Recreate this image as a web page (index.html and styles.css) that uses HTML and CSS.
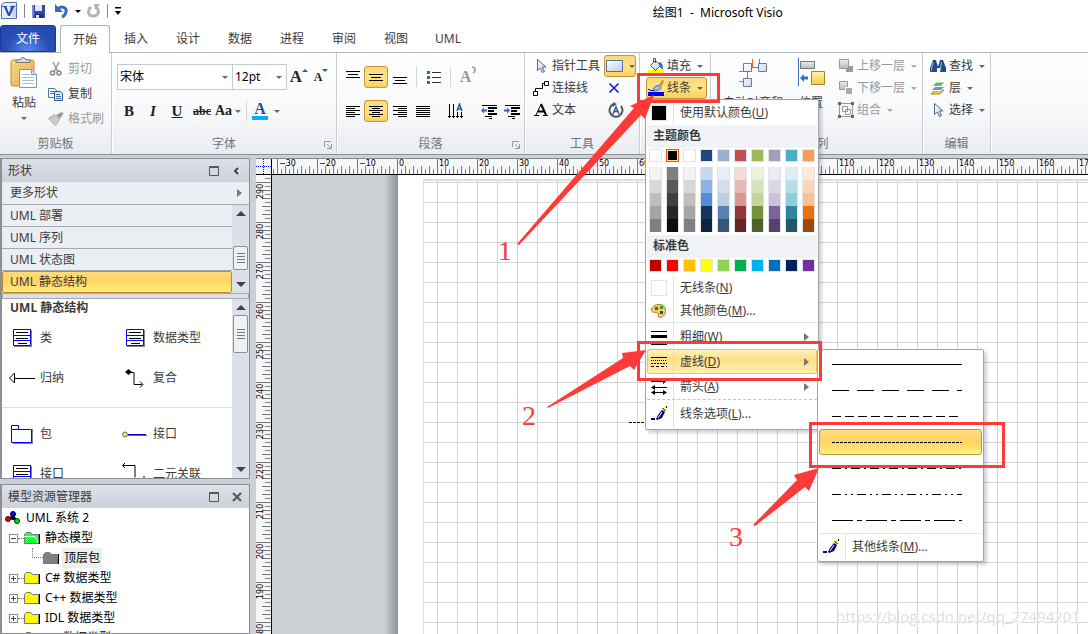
FILE: index.html
```html
<!DOCTYPE html>
<html lang="zh-CN">
<head>
<meta charset="utf-8">
<title>绘图1 - Microsoft Visio</title>
<link rel="stylesheet" href="styles.css">
</head>
<body>
<svg class="defs" aria-hidden="true">
  <defs>
    <linearGradient id="g-face" x1="0" y1="0" x2="1" y2="1"><stop offset="0" stop-color="#fff"/><stop offset="1" stop-color="#bccde2"/></linearGradient>
    <linearGradient id="g-gold" x1="0" y1="0" x2="0" y2="1"><stop offset="0" stop-color="#fff3b0"/><stop offset="1" stop-color="#f6c944"/></linearGradient>
    <linearGradient id="g-grey" x1="0" y1="0" x2="0" y2="1"><stop offset="0" stop-color="#eee"/><stop offset="1" stop-color="#b9b9b9"/></linearGradient>
    <linearGradient id="g-clip" x1="0" y1="0" x2="1" y2="1"><stop offset="0" stop-color="#f9d987"/><stop offset="1" stop-color="#e3a94a"/></linearGradient>
    <pattern id="p-yellow" width="2" height="2" patternUnits="userSpaceOnUse"><path fill="#ff0" d="M0 0h2v2H0z"/><path fill="#e4dfa0" d="M0 0h1v1H0zM1 1h1v1H1z"/></pattern>
    <pattern id="p-green" width="2" height="2" patternUnits="userSpaceOnUse"><path fill="#0f2" d="M0 0h2v2H0z"/><path fill="#7fe08a" d="M0 0h1v1H0zM1 1h1v1H1z"/></pattern>
    <symbol id="i-pointer" viewBox="0 0 16 16"><path fill="url(#g-face)" stroke="#55678a" d="M4.500 1.500v11l3-2.500 2 4.500 2-1-2-4.500h3.500z"/></symbol>
    <symbol id="i-pen" viewBox="0 0 16 16"><path fill="#ff0" d="M13 1h2v3l-2 2-2-2z"/><path stroke="#000" d="M11.500 2l3 3M15.500 0v2"/><path fill="#00007f" d="M11 4l3 2-3 6-5 2-1-1 2-4z"/><path stroke="#fff" d="M11 6L7 12"/><path fill="#00007f" d="M0 12h4v2H0z"/></symbol>
    <symbol id="i-class" viewBox="0 0 20 20"><path fill="#888" d="M2 18h17V2h1v17H2z"/><path fill="#fff" stroke="#00f" d="M1.500 1.500h17v16h-17zM1.500 7.500h17M1.500 12.500h17"/><path stroke="#000" d="M4 4.500h12M4 10.500h12M6 15.500h9"/></symbol>
    <symbol id="i-folder" viewBox="0 0 16 14"><path fill="#000" d="M2 13h14V3h-1v9H2z"/><path stroke="#777" d="M.5 12.500V3.500l2-2h4l2 2h6v9z"/></symbol>
    <symbol id="i-launch" viewBox="0 0 8 8"><path fill="none" stroke="#999" d="M.5 6V.5H7M3 3l4 4M7.500 3v4.500H3"/></symbol>
  </defs>
</svg>

<div class="app">
  <header class="titlebar">
    <div class="quick">
      <svg width="18" height="20" viewBox="0 0 18 20"><path fill="#e8effb" stroke="#4f6fb5" d="M1.500 3.500l3-2h12v16h-15z"/><path fill="#c5d4ef" d="M12 4h4v12h-4z"/><path fill="#2b4fa3" d="M2 5h5v1H6.500l2.500 6 2-6H10V5h5v1h-1l-4 9H8L4 6H2z"/></svg>
      <span class="vline"></span>
      <button class="qbtn" aria-label="保存"><svg width="15" height="15" viewBox="0 0 15 15"><path fill="#3c46a8" d="M1 1h13v13H2l-1-1z"/><path fill="#dfe8fa" d="M4 1h7v6H4z"/><path fill="#222a70" d="M4 10h8v4H4z"/><path fill="#ddd" d="M5 11h3v3H5z"/><path fill="#7886dc" d="M1 1h2v12H1z"/></svg></button>
      <button class="qbtn undo" aria-label="撤消"><svg width="14" height="14" viewBox="0 0 14 14"><path fill="none" stroke="#3568c2" stroke-width="3" d="M3 5c4-4 9-1 8 3-.5 3-2 4-4 5"/><path fill="#3568c2" d="M0 0v8h8z"/></svg></button>
      <i class="caret dark"></i>
      <button class="qbtn" aria-label="重复"><svg width="14" height="14" viewBox="0 0 14 14"><path fill="none" stroke="#b5b5b5" stroke-width="3" d="M4 3c-4 3-3 9 2 9 6 0 7-6 3-9"/><path fill="#b5b5b5" d="M7 0h6L8 6z"/></svg></button>
      <span class="vline"></span>
      <svg width="8" height="8" viewBox="0 0 8 8"><path d="M1 0h6v1.500H1zM1 4h6L4 8z"/></svg>
    </div>
    <h1 class="title">绘图1&nbsp; -&nbsp; Microsoft Visio</h1>
  </header>

  <nav class="tabs">
    <button class="file-tab">文件</button>
    <button class="tab active">开始</button>
    <button class="tab">插入</button>
    <button class="tab">设计</button>
    <button class="tab">数据</button>
    <button class="tab">进程</button>
    <button class="tab">审阅</button>
    <button class="tab">视图</button>
    <button class="tab">UML</button>
  </nav>

  <div class="ribbon">
    <section class="group g-clip">
      <div class="group-body">
        <button class="big">
          <svg width="28" height="32" viewBox="0 0 28 32"><rect x="1" y="3" width="23" height="26" rx="2" fill="url(#g-clip)" stroke="#c48b2e"/><path fill="#ddd" stroke="#777" d="M6 5.500h14V3h-4c0-3-6-3-6 0H6z"/><path fill="#fff" stroke="#7a94bd" d="M9.500 12.500h12l5 5v13h-17z"/><path fill="#cfdcf0" stroke="#7a94bd" d="M21.500 12.500v5h5"/><path stroke="#a9bcd8" d="M12 17.500h8M12 20.500h12M12 23.500h12M12 26.500h12"/></svg>
          <span>粘贴</span><i class="caret"></i>
        </button>
        <div class="rows rows-clip">
          <button class="cmd off"><svg width="16" height="16" viewBox="0 0 16 16"><path fill="none" stroke="#999" stroke-width="1.500" d="M5 1l5 10M11 1L6 11"/><circle cx="4.500" cy="12" r="2" fill="none" stroke="#888" stroke-width="1.500"/><circle cx="11" cy="12" r="2" fill="none" stroke="#888" stroke-width="1.500"/></svg>剪切</button>
          <button class="cmd"><svg width="16" height="16" viewBox="0 0 16 16"><path fill="#fff" stroke="#4a74b4" d="M.5 2.500h6l2 2v7h-8z"/><path fill="#d8e6f8" stroke="#2c5596" d="M6.500 5.500h6l2 2v7h-8z"/><path stroke="#4a74b4" d="M2 5.500h4M2 7.500h4M8 8.500h4M8 10.500h5M8 12.500h5"/></svg>复制</button>
          <button class="cmd off"><svg width="16" height="16" viewBox="0 0 16 16"><path fill="#ccc" stroke="#aaa" d="M.5 7.500l6-4 5 5-4 6z"/><path fill="#999" d="M8 4l2-1 4-2 1.500 1.500L13 6l-1 2z"/></svg>格式刷</button>
        </div>
      </div>
      <h2 class="group-name">剪贴板</h2>
    </section>

    <section class="group g-font">
      <div class="group-body col">
        <div class="strip">
          <span class="combo combo-name"><select aria-label="字体"><option>宋体</option></select><i class="caret"></i></span>
          <span class="combo combo-size"><select aria-label="字号"><option>12pt</option></select><i class="caret"></i></span>
          <button class="glyph grow" aria-label="增大字体">A<i class="up"></i></button>
          <button class="glyph shrink" aria-label="减小字体">A<i class="down"></i></button>
        </div>
        <div class="strip">
          <button class="glyph"><b>B</b></button>
          <button class="glyph"><em>I</em></button>
          <button class="glyph"><u>U</u></button>
          <button class="glyph small"><s>abc</s></button>
          <button class="glyph wide">Aa<i class="caret"></i></button>
          <span class="vsep"></span>
          <button class="glyph font-color">A</button><i class="caret"></i>
        </div>
      </div>
      <h2 class="group-name">字体</h2>
      <svg class="launch"><use href="#i-launch"/></svg>
    </section>

    <section class="group g-para">
      <div class="group-body col">
        <div class="strip">
          <button class="ib" aria-label="顶端对齐"><svg width="16" height="16"><path stroke="#000" d="M1 2.500h14M3 5.500h10M1 8.500h14"/></svg></button>
          <button class="ib on" aria-label="中部对齐"><svg width="16" height="16"><path stroke="#000" d="M1 5.500h14M3 8.500h10M1 11.500h14"/></svg></button>
          <button class="ib" aria-label="底端对齐"><svg width="16" height="16"><path stroke="#000" d="M1 8.500h14M3 11.500h10M1 14.500h14"/></svg></button>
          <span class="vsep"></span>
          <button class="ib" aria-label="项目符号"><svg width="16" height="16"><path stroke="#333" d="M6 3.500h9M6 8.500h9M6 13.500h9"/><path stroke="#3d5f9e" stroke-width="3" d="M1 3.500h3M1 8.500h3M1 13.500h3"/></svg></button>
          <span class="vsep"></span>
          <button class="glyph dim" aria-label="旋转文本">A<svg width="5" height="9"><path fill="none" stroke="#999" stroke-width="1.500" d="M1 1c4 0 4 4 1 6"/></svg></button>
        </div>
        <div class="strip">
          <button class="ib" aria-label="左对齐"><svg width="16" height="16"><path stroke="#000" d="M1 3.500h14M1 5.500h9M1 7.500h14M1 9.500h9M1 11.500h14M1 13.500h9"/></svg></button>
          <button class="ib on" aria-label="居中"><svg width="16" height="16"><path stroke="#000" d="M1 3.500h14M4 5.500h8M1 7.500h14M4 9.500h8M1 11.500h14M4 13.500h8"/></svg></button>
          <button class="ib" aria-label="右对齐"><svg width="16" height="16"><path stroke="#000" d="M1 3.500h14M6 5.500h9M1 7.500h14M6 9.500h9M1 11.500h14M6 13.500h9"/></svg></button>
          <button class="ib" aria-label="两端对齐"><svg width="16" height="16"><path stroke="#000" d="M1 3.500h14M1 5.500h14M1 7.500h14M1 9.500h14M1 11.500h14M1 13.500h14"/></svg></button>
          <span class="vsep"></span>
          <button class="ib" aria-label="文字方向"><svg width="16" height="16"><path stroke="#000" d="M1.500 1v14M5.500 1v14M9.500 9v6M13.500 9v6M0 13.500h3M4 13.500h3M8 13.500h3M12 13.500h3"/><path fill="none" stroke="#31569c" stroke-width="1.500" d="M9 8l2.500-7L14 8M10 6h4"/></svg></button>
          <span class="vsep"></span>
          <button class="ib" aria-label="减少缩进"><svg width="16" height="16"><path stroke="#000" d="M1 2.500h15M11 15.500h-3"/><path stroke="#000" stroke-width="2" d="M7 5h9M7 8h6M7 11h9"/><path stroke="#000" d="M4 13.500h7"/><path fill="#3567b8" d="M0 7.500l3-3v2h3v2H3v2z"/></svg></button>
          <button class="ib" aria-label="增加缩进"><svg width="16" height="16"><path stroke="#000" d="M1 2.500h15M11 15.500h-3"/><path stroke="#000" stroke-width="2" d="M7 5h9M7 8h6M7 11h9"/><path stroke="#000" d="M4 13.500h7"/><path fill="#3567b8" d="M6 7.500l-3-3v2H0v2h3v2z"/></svg></button>
        </div>
      </div>
      <h2 class="group-name">段落</h2>
      <svg class="launch"><use href="#i-launch"/></svg>
    </section>

    <section class="group g-tools">
      <div class="group-body">
        <div class="rows">
          <button class="cmd"><svg width="16" height="16"><use href="#i-pointer"/></svg>指针工具</button>
          <button class="cmd"><svg width="16" height="16" viewBox="0 0 16 16"><path fill="none" stroke="#000" d="M2.500 11V8.500h7v-5h2"/><path fill="#fff" stroke="#000" d="M.5 11.500h4v4h-4zM11.500 1.500h4v4h-4z"/></svg>连接线</button>
          <button class="cmd"><svg width="16" height="16" viewBox="0 0 16 16"><path fill="none" stroke="#000" stroke-width="2" d="M8 2l5 11M5 9.500h6"/><path stroke="#000" d="M3 13L8 2.500M1 13.500h5M10 13.500h5"/></svg>文本</button>
        </div>
        <div class="rows tool-side">
          <button class="split" aria-label="矩形"><svg width="17" height="12"><path fill="url(#g-face)" stroke="#54709f" d="M.5.500h16v11H.500z"/></svg><i class="caret"></i></button>
          <button class="side" aria-label="连接点"><svg width="12" height="12"><path stroke="#11d" stroke-width="1.500" d="M1.500 1.500l9 9M10.500 1.500l-9 9"/></svg></button>
          <button class="side" aria-label="文本块"><svg width="16" height="16"><path fill="none" stroke="#555" stroke-width="2" d="M13 4a6.500 6.500 0 1 1-7-2"/><path fill="#555" d="M5 0l4 2-4 3z"/><path fill="none" stroke="#2b57a8" stroke-width="1.500" d="M5 12l3-7 3 7M6 9.500h4"/></svg></button>
        </div>
      </div>
      <h2 class="group-name">工具</h2>
    </section>

    <section class="group g-shape">
      <div class="group-body">
        <div class="rows">
          <button class="cmd"><svg width="16" height="16" viewBox="0 0 16 16"><path fill="#ff0" d="M0 12h16v4H0z"/><path fill="url(#g-face)" stroke="#44546e" d="M2.500 7.500l5-5 5 5-5 5z"/><path fill="none" stroke="#44546e" d="M5.500 5V.500h2V5"/><path fill="#3567b8" d="M11 4c3 0 4 3 4 8l-3-3z"/></svg>填充<i class="caret"></i></button>
          <button class="cmd pressed"><svg width="16" height="16" viewBox="0 0 16 16"><path fill="#00f" d="M0 12h16v4H0z"/><path fill="#9dbce8" stroke="#3d67a8" d="M5 10.500c1-4 3-5 6-5l2 2c0 2-4 4-8 3z"/><path fill="#c58d35" d="M11 5l3-5 2 1-3 6z"/><path fill="#11a" d="M0 9h2v1H0zM2 10h4v1H2z"/></svg>线条<i class="caret"></i></button>
        </div>
      </div>
      <h2 class="group-name">形状</h2>
    </section>

    <section class="group g-arrange">
      <div class="group-body">
        <button class="big"><svg width="30" height="32" viewBox="0 0 30 32"><path fill="none" stroke="#f06018" d="M14.500 2v8M21.500 2v8M10 10.500h16M9.500 16v8M1 14.500h8M1 24.500h5M9.500 14v10"/><path fill="url(#g-face)" stroke="#667a99" d="M5.500 6.500h8v8h-8zM20.500 6.500h8v8h-8zM5.500 21.500h8v8h-8z"/></svg><span>自动对齐和</span></button>
        <button class="big"><svg width="28" height="32" viewBox="0 0 28 32"><path stroke="#3a6dbb" d="M1.500 1v28"/><path fill="url(#g-grey)" stroke="#777" d="M3.500 4.500h14v7h-14z"/><path fill="url(#g-gold)" stroke="#a5822d" d="M14.500 14.500h13v13h-13z"/><path fill="#3a6dbb" d="M3 21l4-4v2.500h4v3H7V25z"/></svg><span>位置</span></button>
        <div class="rows">
          <button class="cmd off"><svg width="16" height="16" viewBox="0 0 16 16"><path fill="#999" d="M8 8h7v6H8z"/><path fill="url(#g-grey)" stroke="#999" d="M1.500 1.500h9v9h-9z"/></svg>上移一层<i class="caret"></i></button>
          <button class="cmd off"><svg width="16" height="16" viewBox="0 0 16 16"><path fill="url(#g-grey)" stroke="#999" d="M1.500 1.500h8v8h-8z"/><path fill="#aaa" stroke="#fff" d="M7.500 7.500h7v7h-7z"/></svg>下移一层<i class="caret"></i></button>
          <button class="cmd off"><svg width="16" height="16" viewBox="0 0 16 16"><path fill="none" stroke="#999" d="M2 1.500h12M1.500 2v12M14.500 2v12M2 14.500h12M4.500 4.500h5v5h-5zM7.500 7.500h5v5h-5z"/><path fill="#666" d="M0 0h3v3H0zM13 0h3v3h-3zM0 13h3v3H0zM13 13h3v3h-3z"/></svg>组合<i class="caret"></i></button>
        </div>
      </div>
      <h2 class="group-name">排列</h2>
    </section>

    <section class="group g-edit">
      <div class="group-body">
        <div class="rows">
          <button class="cmd"><svg width="16" height="16" viewBox="0 0 16 16"><path fill="#24497f" d="M3 2h3l1 4h2l1-4h3l3 8v4h-6v-4H7v4H0v-4z"/><path fill="#8fb2e2" d="M3 4h1L2 11v2H1v-3zM11 4h1l-1 7v2h-1v-3zM7 6h2v2H7z"/></svg>查找<i class="caret"></i></button>
          <button class="cmd"><svg width="16" height="16" viewBox="0 0 16 16"><path fill="#f3c13a" stroke="#b78a1a" d="M1 14l4-4h9l-4 4z"/><path fill="#5a94dc" stroke="#fff" d="M1 10.500l4-4h10l-4 4z"/><path fill="#6cb75a" stroke="#fff" d="M2 6.500l4-4.500h9l-4 4.500z"/></svg>层<i class="caret"></i></button>
          <button class="cmd"><svg width="16" height="16"><use href="#i-pointer"/></svg>选择<i class="caret"></i></button>
        </div>
      </div>
      <h2 class="group-name">编辑</h2>
    </section>
  </div>

  <main class="work">
    <aside class="side-col">
      <section class="panel shapes">
        <header class="panel-head"><h3>形状</h3>
          <button aria-label="窗口"><svg width="10" height="10"><path fill="none" stroke="#555" d="M.5.500h9v9h-9zM0 1.500h10"/></svg></button>
          <button aria-label="折叠"><svg width="10" height="10"><path fill="none" stroke="#444" stroke-width="2" d="M6 2L3 5l3 3"/></svg></button>
        </header>
        <button class="more">更多形状<i class="right"></i></button>
        <div class="stencils">
          <div class="stencil-list">
            <button>UML 部署</button><button>UML 序列</button><button>UML 状态图</button><button class="current">UML 静态结构</button>
          </div>
          <div class="scroll mid"><i class="up"></i><span class="thumb"></span><i class="down"></i></div>
        </div>
        <div class="splitter"></div>
        <div class="masters">
          <div class="master-list">
            <h4>UML 静态结构</h4>
            <div class="master-grid">
              <button><svg width="24" height="20"><use href="#i-class" x="3" width="20" height="20"/></svg>类</button>
              <button><svg width="24" height="20"><use href="#i-class" x="3" width="20" height="20"/></svg>数据类型</button>
              <button><svg width="26" height="22"><path fill="#fff" stroke="#000" d="M5.500 6L.5 11l5 5zM6 11.500h20"/></svg>归纳</button>
              <button><svg width="24" height="22"><path fill="none" stroke="#000" d="M6 5.500h6v12h8M18 14.500l3 3-3 3"/><path d="M3 5l3.500-3L10 5 6.500 8z"/></svg>复合</button>
            </div>
            <div class="master-grid lower">
              <button><svg width="25" height="22"><path fill="#888" d="M4 20h19V6h1v15H4z"/><path fill="#fff" stroke="#00f" d="M2.500 6.500v13h20v-13zM2.500 6.500v-4h7v4"/></svg>包</button>
              <button><svg width="26" height="22"><path stroke="#770" d="M6 12.500h19"/><path stroke="#00c" d="M6 11.500h18"/><circle cx="3" cy="11.500" r="2.500" fill="#ddd" stroke="#770"/></svg>接口</button>
              <button><svg width="24" height="20"><use href="#i-class" x="3" width="20" height="20"/></svg>接口</button>
              <button><svg width="24" height="22"><path fill="none" stroke="#000" d="M3 0L.5 2.500 3 5M1 2.500h12v12M22 13v2"/></svg>二元关联</button>
            </div>
          </div>
          <div class="scroll top"><i class="up"></i><span class="thumb"></span><i class="down"></i></div>
        </div>
      </section>

      <section class="panel explorer">
        <header class="panel-head"><h3>模型资源管理器</h3>
          <button aria-label="窗口"><svg width="10" height="10"><path fill="none" stroke="#555" d="M.5.500h9v9h-9zM0 1.500h10"/></svg></button>
          <button aria-label="关闭"><svg width="10" height="10"><path stroke="#555" stroke-width="2" d="M1 1l8 8M9 1L1 9"/></svg></button>
        </header>
        <ul class="tree">
          <li class="root"><svg width="16" height="14"><path stroke="#000" d="M4 8l4-5 4 7"/><circle cx="8" cy="3" r="2.500" fill="#00f" stroke="#003"/><circle cx="3" cy="8" r="2.500" fill="#e00" stroke="#300"/><circle cx="12" cy="10" r="2.500" fill="#0d0" stroke="#030"/></svg>UML 系统 2</li>
          <li class="node"><i class="box minus"></i><i class="dots"></i><svg width="16" height="14" fill="url(#p-green)"><use href="#i-folder"/><path fill="none" stroke="#eee" d="M0 5.500h11l3 6"/></svg>静态模型</li>
          <li class="leaf"><i class="elbow"></i><svg width="16" height="14" fill="#808080"><use href="#i-folder"/></svg><span class="picked">顶层包</span></li>
          <li class="node"><i class="box"></i><i class="dots"></i><svg width="16" height="14" fill="url(#p-yellow)"><use href="#i-folder"/></svg>C# 数据类型</li>
          <li class="node"><i class="box"></i><i class="dots"></i><svg width="16" height="14" fill="url(#p-yellow)"><use href="#i-folder"/></svg>C++ 数据类型</li>
          <li class="node"><i class="box"></i><i class="dots"></i><svg width="16" height="14" fill="url(#p-yellow)"><use href="#i-folder"/></svg>IDL 数据类型</li>
          <li class="node"><i class="box"></i><i class="dots"></i><svg width="16" height="14" fill="url(#p-yellow)"><use href="#i-folder"/></svg>VB 数据类型</li>
        </ul>
      </section>
    </aside>

    <div class="editor">
      <div class="corner"><svg width="15" height="15"><path stroke="#00f" stroke-dasharray="1 1" d="M7.500 0v15M0 7.500h15"/></svg></div>
      <div class="ruler-h" data-first="-30" data-step="10" data-count="21"></div>
      <div class="ruler-v" data-first="290" data-step="-10" data-count="12"></div>
      <div class="canvas"><div class="desk"></div><div class="page"><div class="grid"></div></div></div>
    </div>
  </main>

  <div class="drawn-line"></div>

  <div class="menu line-menu">
    <button class="item default-color"><span class="ico"><i class="chip black"></i></span>使用默认颜色(<u>U</u>)</button>
    <h5>主题颜色</h5>
    <div class="swatches" id="theme"></div>
    <div class="shades" id="shades"></div>
    <h5>标准色</h5>
    <div class="swatches" id="standard"></div>
    <button class="item"><span class="ico"><i class="chip"></i></span>无线条(<u>N</u>)</button>
    <button class="item last"><span class="ico"><svg width="16" height="16"><path fill="#f3cf63" stroke="#a97c25" d="M7 1.500c5-1 8 3 7.500 7-.5 5-5 7-7 5.500-1-1 1-3-1-4C4 9 .5 10 .5 7c0-3 3-5 6.500-5.500z"/><path fill="#d22" d="M4 4h3v3H4z"/><path fill="#2a2" d="M9 3h3v3H9z"/><path fill="#24c" d="M9 8h3v3H9z"/></svg></span>其他颜色(<u>M</u>)...</button>
    <button class="item sub"><span class="ico"><svg width="16" height="16"><path d="M0 2h16v1H0zM0 6h16v3H0zM0 12h16v4H0z"/></svg></span>粗细(<u>W</u>)<i class="right"></i></button>
    <button class="item sub hot"><span class="ico"><svg width="16" height="16"><path stroke="#000" d="M0 3.500h16"/><path stroke="#000" stroke-dasharray="1 1" d="M0 6.500h16"/><path stroke="#000" stroke-dasharray="2 1" d="M0 9.500h16"/><path stroke="#000" stroke-dasharray="3 2" d="M0 12.500h16"/></svg></span>虚线(<u>D</u>)<i class="right"></i></button>
    <button class="item sub"><span class="ico"><svg width="16" height="16"><path stroke="#000" d="M0 2.500h14M2 8.500h14M2 13.500h12"/><path d="M12 0v5l3-2.500zM4 6v5L0 8.500zM4 11v5l-4-2.500zM12 11v5l4-2.500z"/></svg></span>箭头(<u>A</u>)<i class="right"></i></button>
    <button class="item options"><span class="ico"><svg width="16" height="16"><use href="#i-pen"/></svg></span>线条选项(<u>L</u>)...</button>
  </div>

  <div class="menu dash-menu">
    <button class="dash" aria-label="实线"><svg><path d="M0 1.500h130"/></svg></button>
    <button class="dash" aria-label="长虚线"><svg><path stroke-dasharray="17 8" d="M0 1.500h130"/></svg></button>
    <button class="dash" aria-label="短虚线"><svg><path stroke-dasharray="9 4" d="M0 1.500h126"/></svg></button>
    <button class="dash chosen" aria-label="圆点虚线"><svg><path stroke-dasharray="3 1" d="M0 1.500h130"/></svg></button>
    <button class="dash" aria-label="点划线"><svg><path stroke-dasharray="9 4 2 4" d="M0 1.500h130"/></svg></button>
    <button class="dash" aria-label="双点划线"><svg><path stroke-dasharray="9 4 2 4 2 4" d="M0 1.500h130"/></svg></button>
    <button class="dash" aria-label="长点划线"><svg><path stroke-dasharray="21 4 5 4" d="M0 1.500h130"/></svg></button>
    <button class="item more-lines"><span class="ico"><svg width="16" height="16"><use href="#i-pen"/></svg></span>其他线条(<u>M</u>)...</button>
  </div>

  <svg class="notes" width="1088" height="634" viewBox="0 0 1088 634">
    <g fill="none" stroke="#fd3a38" stroke-width="3"><path d="M638.500 74.500h80v27h-80zM638.500 342.500h182v37h-182zM810.500 423.500h193v43h-193z"/></g>
    <g fill="#fd3a38"><path d="M517 244L634 108l-4-2 24-11-9 24-4-4-122 130zM547 407l76-49-1-5 24-3-12 20-4-4-82 42zM753 525l44-45-3-5 25-7-10 23-4-4-50 39z"/></g>
    <g class="digits"><text x="498" y="260">1</text><text x="522" y="425">2</text><text x="729" y="546">3</text></g>
  </svg>
  <p class="watermark">https://blog.csdn.net/qq_27494201</p>
</div>
<script src="script.js"></script>
</body>
</html>
```
FILE: styles.css
```css
* { box-sizing: border-box; }
body, h1, h2, h3, h4, h5, p, ul { margin: 0; padding: 0; font-size: 12px; font-weight: 400; }
body, button, select { font-family: "Noto Sans", "Noto Sans CJK SC", sans-serif; font-size: 12px; line-height: 16px; color: #3b3b3b; }
body { background: #fff; overflow: hidden; }
button { border: 0; padding: 0; margin: 0; background: none; text-align: left; white-space: nowrap; }
svg { flex: none; display: block; }
.defs { position: absolute; width: 0; height: 0; }
.app { position: relative; display: flex; flex-direction: column; height: 100vh; overflow: hidden; }

.caret { flex: none; border: 3px solid transparent; border-top-color: #666; border-bottom: 0; width: 6px; height: 3px; }
.caret.dark { border-top-color: #000; }
.up, .down { border: 5px solid transparent; border-bottom-color: #444; border-top: 0; }
.down { border-top: 5px solid #444; border-bottom: 0; }
.right { border: 4px solid transparent; border-left: 5px solid #777; border-right: 0; }

/* title bar */
.titlebar { display: grid; grid-template-columns: 3fr 2fr; height: 25px; align-items: center; flex: none; }
.quick { display: flex; align-items: center; gap: 6px; padding-bottom: 3px; }
.qbtn { display: flex; }
.undo { margin-left: 3px; }
.vline { width: 1px; height: 14px; background: #888; }
.title { color: #000; white-space: nowrap; }

/* tabs */
.tabs { display: flex; height: 28px; flex: none; border-bottom: 1px solid #b0b4bb; }
.file-tab { width: 56px; color: #fff; text-align: center; border: 1px solid #1b3a95; border-radius: 3px 3px 0 0; background: radial-gradient(ellipse at 50% 100%, #5a87ea, #2850b8 55%, #2346ab); margin-right: 4px; }
.tab { width: 52px; text-align: center; }
.tab.active { width: 50px; margin-bottom: -1px; border: 1px solid #b0b4bb; border-bottom: 0; border-radius: 3px 3px 0 0; background: #fff; }

/* ribbon */
.ribbon { display: flex; height: 102px; flex: none; background: linear-gradient(#fff, #f7f8fa 60%, #e9ecf0); border-bottom: 1px solid #8b9097; }
.group { position: relative; display: flex; flex-direction: column; border-right: 1px solid #c9ccd2; box-shadow: 1px 0 #fff; }
.group-body { flex: 1; display: flex; padding-top: 2px; }
.group-name { height: 20px; line-height: 20px; text-align: center; color: #70757f; }
.launch { position: absolute; right: 4px; bottom: 5px; width: 8px; height: 8px; }
.col { flex-direction: column; }
.rows { display: flex; flex-direction: column; align-items: flex-start; }
.cmd { display: flex; align-items: center; gap: 3px; height: 22px; }
.cmd .caret { margin-left: 3px; }
.off { color: #999; }
.off .caret { border-top-color: #aaa; }
.big { display: flex; flex-direction: column; align-items: center; gap: 6px; padding-top: 2px; }
.g-clip { width: 112px; }
.g-clip .big { width: 48px; }
.rows-clip { padding-top: 1px; }
.rows-clip .cmd { height: 25px; gap: 4px; }
.g-font { width: 225px; }
.g-font .group-body { padding: 12px 5px 0; gap: 10px; }
.g-para { width: 188px; }
.g-para .group-body { padding: 12px 4px 0; gap: 10px; }
.strip { display: flex; align-items: center; height: 24px; }
.combo { display: flex; flex: none; align-items: center; border: 1px solid #c5c8cd; height: 26px; background: #fff; padding-right: 4px; }
.combo select { flex: 1; min-width: 0; appearance: none; border: 0; background: none; padding: 0 2px; color: #000; font-size: 12px; }
.combo-name { width: 116px; }
.combo-size { width: 55px; margin-left: -1px; }
.glyph { display: flex; flex: none; align-items: center; justify-content: center; width: 24px; height: 22px; font-family: "Liberation Serif", serif; font-weight: 700; font-size: 15px; color: #222; }
.glyph.small { font-size: 12px; width: 26px; }
.glyph.wide { width: 26px; gap: 3px; font-size: 14px; }
.glyph.grow { font-size: 17px; }
.glyph.shrink { font-size: 12px; width: 20px; }
.glyph .up, .glyph .down { align-self: flex-start; border-width: 0 3px 3px; border-bottom-color: #31569c; margin-top: 3px; }
.glyph .down { border-width: 3px 3px 0; border-top-color: #31569c; }
.glyph.dim { color: #999; font-size: 16px; }
.glyph.dim svg { align-self: flex-start; }
.font-color { width: 16px; margin-right: 6px; border-bottom: 4px solid #00b0f0; color: #2b4c86; font-size: 16px; height: 18px; }
.vsep { width: 1px; height: 20px; background: #d0d3d8; margin: 0 5px; }
.ib { display: flex; align-items: center; justify-content: center; width: 23px; height: 22px; flex: none; }
.ib.on, .pressed, .split { background: linear-gradient(#fbd878, #fee486 50%, #fdd05c); border: 1px solid #c2963c; border-radius: 3px; }
.ib.on { width: 24px; }
.g-tools { width: 115px; }
.g-tools .group-body { padding-left: 8px; gap: 4px; }
.tool-side { align-items: stretch; width: 32px; }
.split { display: flex; align-items: center; justify-content: center; gap: 4px; height: 22px; }
.split .caret { margin-left: 2px; }
.side { height: 22px; padding-left: 4px; }
.g-shape { width: 71px; }
.g-shape .group-body { padding-left: 6px; }
.g-shape .cmd { padding-left: 2px; }
.g-shape .pressed { width: 61px; padding-left: 1px; }
.g-arrange { width: 212px; }
.g-arrange .group-body { padding-left: 11px; gap: 10px; }
.g-arrange .big { width: 62px; }
.g-arrange .big + .big { width: 34px; }
.g-edit { width: 68px; }
.g-edit .group-body { padding-left: 7px; }

/* work area */
.work { flex: 1; min-height: 0; display: flex; padding-top: 3px; background: #cdd0d5; }
.side-col { width: 250px; flex: none; display: flex; flex-direction: column; gap: 5px; min-height: 0; }
.panel { background: #fff; border: 1px solid #8b9097; border-left-width: 2px; }
.panel-head { display: flex; align-items: center; gap: 13px; height: 23px; padding: 0 7px 0 6px; background: linear-gradient(#dde1e7, #ccd1da); }
.panel-head h3 { flex: 1; }
.more { display: flex; align-items: center; justify-content: space-between; width: 100%; height: 23px; padding: 0 7px 0 8px; background: #ebeef2; border-bottom: 1px solid #a5a8ad; }
.stencils, .masters { display: flex; }
.stencil-list { flex: 1; }
.stencil-list button { display: block; width: 100%; height: 22px; padding-left: 8px; background: #ebeef2; border-bottom: 1px solid #a5a8ad; }
.stencil-list .current { border: 1px solid #c2882a; border-radius: 2px; padding-left: 7px; background: linear-gradient(#fddc7c, #ffd465 50%, #fff27e); }
.scroll { width: 17px; background: #dce0e8; display: flex; flex-direction: column; align-items: center; justify-content: space-between; padding: 6px 0; }
.thumb { width: 15px; height: 38px; border: 1px solid #8b9097; border-radius: 2px; background: repeating-linear-gradient(#777 0 1px, transparent 1px 3px) center / 8px 10px no-repeat, #eff1f5; }
.mid .thumb { height: 24px; margin-top: 18px; }
.top .thumb { margin-bottom: auto; margin-top: 5px; }
.splitter { height: 6px; border: 1px solid #a5a8ad; background: #dce0e8; }
.masters { height: 179px; overflow: hidden; }
.master-list { flex: 1; }
.master-list h4 { padding: 1px 8px; font-weight: 700; height: 19px; }
.master-grid { display: grid; grid-template-columns: 113px 1fr; grid-auto-rows: 40px; padding: 0 0 9px 7px; border-bottom: 1px solid #ddd; }
.master-grid.lower { padding-top: 6px; border: 0; }
.master-grid button { display: grid; grid-template-columns: 31px 1fr; align-items: center; }
.master-grid svg { justify-self: start; }
.shapes { height: 321px; flex: none; overflow: hidden; }
.explorer { flex: 1; overflow: hidden; }
.tree { list-style: none; color: #000; }
.tree li { display: flex; align-items: center; height: 20px; color: #000; }
.root { padding-left: 3px; gap: 5px; }
.node { padding-left: 7px; }
.node svg, .leaf svg { margin-right: 5px; }
.box { width: 9px; height: 9px; border: 1px solid #888; background: linear-gradient(#2a4a90, #2a4a90) center / 5px 1px no-repeat, linear-gradient(#2a4a90, #2a4a90) center / 1px 5px no-repeat, #fff; }
.box.minus { background: linear-gradient(#2a4a90, #2a4a90) center / 5px 1px no-repeat, #fff; }
.dots { width: 6px; border-top: 1px dotted #777; }
.leaf { padding-left: 30px; }
.elbow { width: 11px; height: 10px; border: 1px dotted #777; border-width: 0 0 1px 1px; align-self: flex-start; }
.picked { background: #eee; padding: 0 2px; line-height: 20px; margin-left: -2px; }

/* rulers and page */
.editor { flex: 1; min-width: 0; margin-left: 6px; display: grid; grid-template: 16px 1fr / 16px 1fr; border-top: 1px solid #888; }
.corner { background: #f2f3f5; border: solid #000; border-width: 0 1px 1px 0; overflow: hidden; }
.ruler-h, .ruler-v { display: flex; overflow: hidden; font-family: "DejaVu Sans", sans-serif; font-size: 8px; line-height: 9px; color: #000; }
.ruler-h { padding-left: 5px; border-bottom: 1px solid #000; background: linear-gradient(90deg, #777 1px, transparent 1px) 5px 0 / 40px 16px, linear-gradient(90deg, #777 1px, transparent 1px) 5px 100% / 8px 8px repeat-x, linear-gradient(90deg, #888 1px, transparent 1px) 1px 100% / 4px 5px repeat-x, #f5f6f8; }
.ruler-h span { flex: 0 0 40px; padding-left: 2px; }
.ruler-v { flex-direction: column; padding-top: 7px; border-right: 1px solid #000; background: linear-gradient(#777 1px, transparent 1px) 0 7px / 16px 40px, linear-gradient(#777 1px, transparent 1px) 100% 7px / 9px 8px repeat-y, linear-gradient(#888 1px, transparent 1px) 100% 3px / 6px 4px repeat-y, #f5f6f8; }
.ruler-v span { flex: 0 0 40px; writing-mode: vertical-rl; transform: rotate(180deg); text-align: right; padding-bottom: 2px; width: 9px; }
.canvas { display: flex; min-width: 0; }
.desk { width: 126px; flex: none; background: linear-gradient(90deg, #cdd0d5 112px, #8e9299); }
.page { flex: 1; background: #fff; padding: 4px 0 0 25px; display: flex; }
.grid { flex: 1; border-top: 2px solid #ddd; border-left: 1px solid #ddd; background: linear-gradient(90deg, #d4d4d4 1px, transparent 1px) 13px 0 / 20px 20px, linear-gradient(#d4d4d4 1px, transparent 1px) 0 1px / 20px 20px; }
.drawn-line { position: absolute; left: 629px; top: 422px; width: 17px; height: 1px; background: repeating-linear-gradient(90deg, #000 0 3px, #fff 3px 4px); }

/* menus */
.menu { position: absolute; background: #fff; border: 1px solid #a0a3a9; border-radius: 2px; box-shadow: 3px 3px 3px rgba(80, 80, 120, .25); display: flex; flex-direction: column; }
.line-menu { left: 645px; top: 99px; width: 174px; padding: 1px; }
.item { display: flex; align-items: center; height: 25px; width: 100%; font-size: 12px; }
.item.default-color { height: 24px; }
.ico { width: 27px; height: 100%; display: flex; align-items: center; padding-left: 4px; border-right: 1px solid #e2e3e6; margin-right: 6px; flex: none; }
.chip { width: 16px; height: 16px; border: 1px solid #e2e3e6; background: #fff; }
.chip.black { background: #000; }
.menu h5 { height: 23px; line-height: 22px; padding-left: 6px; font-weight: 700; background: #f0f2f5; }
.swatches, .shades { display: flex; gap: 4px; padding: 1px 2px 3px; }
.swatches button { width: 13px; height: 13px; border: 1px solid #e2e3e6; }
.swatches .picked-color { border: 1px solid #f04e1c; box-shadow: inset 0 0 0 1px #ffe28a; }
.shades { padding-top: 2px; }
.shades span { display: flex; flex-direction: column; width: 13px; border: solid #e2e3e6; border-width: 0 1px; }
.shades button { height: 13px; width: 100%; }
.item.last { height: 23px; margin-bottom: 1px; border-bottom: 1px solid #e2e3e6; }
.sub .right { margin-left: auto; margin-right: 8px; }
.hot { border-radius: 3px; box-shadow: inset 0 0 0 1px #efc74e; background: linear-gradient(#fff3c4, #fbdf86 40%, #fff1b8); }
.hot .ico { border-color: #f3dc9a; }
.options { height: 29px; border-top: 1px dashed #c5c5c5; }
.dash-menu { left: 817px; top: 349px; width: 167px; padding: 1px; }
.dash { height: 26px; display: flex; align-items: center; padding-left: 13px; }
.dash svg { width: 130px; height: 3px; stroke: #000; fill: none; }
.dash.chosen { border: 1px solid #c2963c; border-radius: 3px; padding-left: 12px; background: linear-gradient(#fddc80, #ffd161 50%, #fff27e); }
.more-lines { border-top: 1px solid #e2e3e6; height: 27px; }
.notes { position: absolute; left: 0; top: 0; pointer-events: none; }
.digits { font: 28px "Liberation Serif", serif; fill: #fd3a38; }
.watermark { position: absolute; right: 8px; bottom: 8px; font-family: "Open Sans", sans-serif; font-size: 15px; line-height: 20px; color: #dedede; text-shadow: 1px 1px #fff; }
```
FILE: script.js
```javascript
const theme = ['#ffffff', '#000000', '#ffffff', '#1f497d', '#9ab0d0', '#c0504d', '#9bbb59', '#a99bc0', '#4bacc6', '#f79b5a'];
const standard = ['#c00000', '#ff0000', '#ffc000', '#ffff00', '#92d050', '#00b050', '#00b0f0', '#0070c0', '#002060', '#7030a0'];
const shades = [
  ['#f2f2f2', '#d8d8d8', '#bfbfbf', '#a5a5a5', '#7f7f7f'],
  ['#7f7f7f', '#595959', '#3f3f3f', '#262626', '#0c0c0c'],
  ['#f2f2f2', '#d8d8d8', '#bfbfbf', '#a5a5a5', '#7f7f7f'],
  ['#c6d9f0', '#8db3e2', '#548dd4', '#17365d', '#0f243e'],
  ['#e9eef6', '#d5dfeb', '#bccee1', '#5880b2', '#3a5578'],
  ['#f2dcdb', '#e5b9b7', '#d99694', '#953734', '#632423'],
  ['#ebf1dd', '#d7e3bc', '#c3d69b', '#76923c', '#4f6128'],
  ['#ece9f1', '#dcd6e5', '#ccc1d9', '#7f629f', '#56426d'],
  ['#dbeef3', '#b7dde8', '#92cddc', '#31859b', '#205867'],
  ['#fdeada', '#fbd5b5', '#fac08f', '#ea700d', '#9c4a08']
];

function swatch(color) {
  const b = document.createElement('button');
  b.style.background = color;
  b.setAttribute('aria-label', color);
  return b;
}

const themeRow = document.getElementById('theme');
theme.forEach(c => themeRow.append(swatch(c)));
themeRow.children[1].className = 'picked-color';
const standardRow = document.getElementById('standard');
standard.forEach(c => standardRow.append(swatch(c)));
const shadeRow = document.getElementById('shades');
shades.forEach(list => {
  const column = document.createElement('span');
  list.forEach(c => column.append(swatch(c)));
  shadeRow.append(column);
});

document.querySelectorAll('[data-first]').forEach(ruler => {
  const { first, step, count } = ruler.dataset;
  for (let i = 0; i < Number(count); i++) {
    const mark = document.createElement('span');
    mark.textContent = String(Number(first) + i * Number(step)).replace('-', '−');
    ruler.append(mark);
  }
});
```
